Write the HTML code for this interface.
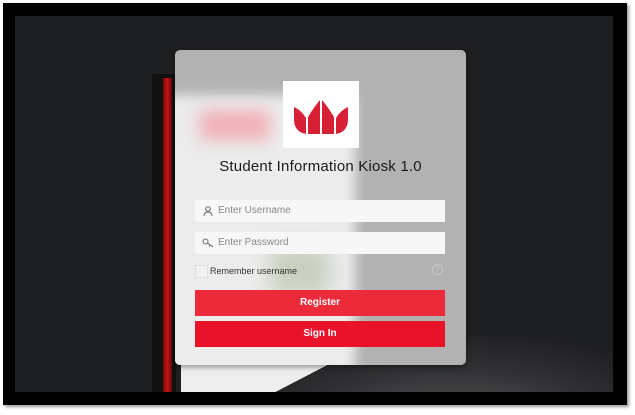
<!DOCTYPE html>
<html><head><style>
html,body{margin:0;padding:0;background:#fff;}
body{width:635px;height:415px;position:relative;overflow:hidden;font-family:"Liberation Sans",sans-serif;}
.outer{position:absolute;left:3px;top:3px;width:624px;height:402px;background:#000;box-shadow:2px 2px 3px #999;}
.inner{position:absolute;left:15px;top:16px;width:598px;height:376px;background:#1e1f21;overflow:hidden;}
.glow{position:absolute;left:250px;top:320px;width:420px;height:90px;background:radial-gradient(ellipse at 45% 100%,#5a5a5a 0%,#303133 45%,transparent 75%);}
.bar{position:absolute;left:137px;top:58px;width:24px;height:330px;background:#111;}
.red{position:absolute;left:148px;top:62px;width:9px;height:320px;background:linear-gradient(90deg,#7a0a0a,#c21414,#6a0808);}
.panel{position:absolute;left:166px;top:60px;width:150px;height:330px;background:#eee;clip-path:polygon(0 0,100% 0,100% 87%,45% 100%,0 100%);}
.card{position:absolute;left:175px;top:50px;width:291px;height:315px;border-radius:5px;background:#b2b2b2;box-shadow:0 2px 6px rgba(0,0,0,.4);overflow:hidden;}
.card .w{position:absolute;left:-10px;top:45px;width:190px;height:300px;background:#ececec;filter:blur(6px);}
.card .r{position:absolute;left:25px;top:60px;width:70px;height:30px;background:#f0b0b8;filter:blur(8px);}
.card .g{position:absolute;left:95px;top:195px;width:60px;height:50px;background:#c8d0c0;filter:blur(10px);}
.logo{position:absolute;left:283px;top:81px;width:76px;height:67px;background:#fff;}
.title{position:absolute;left:175px;width:291px;top:158px;text-align:center;font-size:15px;color:#1a1a1a;letter-spacing:.2px;}
.inp{position:absolute;left:195px;width:250px;height:22px;background:#f7f7f7;font-size:10px;color:#888;line-height:22px;}
.inp span{position:absolute;left:23px;}
.chk{position:absolute;left:195px;top:265px;width:11px;height:11px;border:1px solid #ddd;background:#f2f2f2;}
.rem{position:absolute;left:210px;top:266px;font-size:9px;color:#333;}
.q{position:absolute;left:432px;top:264px;width:9px;height:9px;border:1px solid #c8c8c8;border-radius:50%;font-size:7px;color:#c8c8c8;text-align:center;line-height:9px;}
.btn{position:absolute;left:195px;width:250px;height:26px;color:#fff;font-weight:bold;font-size:10px;text-align:center;line-height:26px;}
</style></head><body>
<div class="outer"></div>
<div class="inner">
 <div class="glow"></div>
 <div class="bar"></div><div class="red"></div>
 <div class="panel"></div>
</div>
<div class="card"><div class="w"></div><div class="r"></div><div class="g"></div></div>
<div class="logo"><svg width="76" height="67" viewBox="0 0 76 67">
<path d="M11 26 Q18 29 23 37 L23 53 Q11 51 11 38 Z" fill="#d71f36"/>
<path d="M25 36 Q31 26 37 19 L37 53 L25 53 Z" fill="#d71f36"/>
<path d="M39 19 Q45 26 51 36 L51 53 L39 53 Z" fill="#d71f36"/>
<path d="M53 37 Q58 29 65 26 L65 38 Q65 51 53 53 Z" fill="#d71f36"/>
</svg></div>
<div class="title">Student Information Kiosk 1.0</div>
<div class="inp" style="top:200px"><svg style="position:absolute;left:8px;top:6px" width="10" height="10" viewBox="0 0 10 10"><circle cx="5" cy="3" r="2.3" fill="none" stroke="#666"/><path d="M1 10 Q1 6 5 6 Q9 6 9 10" fill="none" stroke="#666"/></svg><span>Enter Username</span></div>
<div class="inp" style="top:232px"><svg style="position:absolute;left:7px;top:6px" width="12" height="10" viewBox="0 0 12 10"><circle cx="3.5" cy="3.5" r="2.5" fill="none" stroke="#666"/><path d="M5.5 5 L11 9 M8 7 L7 8.5" fill="none" stroke="#666"/></svg><span>Enter Password</span></div>
<div class="chk"></div><div class="rem">Remember username</div>
<div class="q">?</div>
<div class="btn" style="top:290px;background:#ec2a3a">Register</div>
<div class="btn" style="top:321px;background:#e8122a">Sign In</div>
</body></html>
